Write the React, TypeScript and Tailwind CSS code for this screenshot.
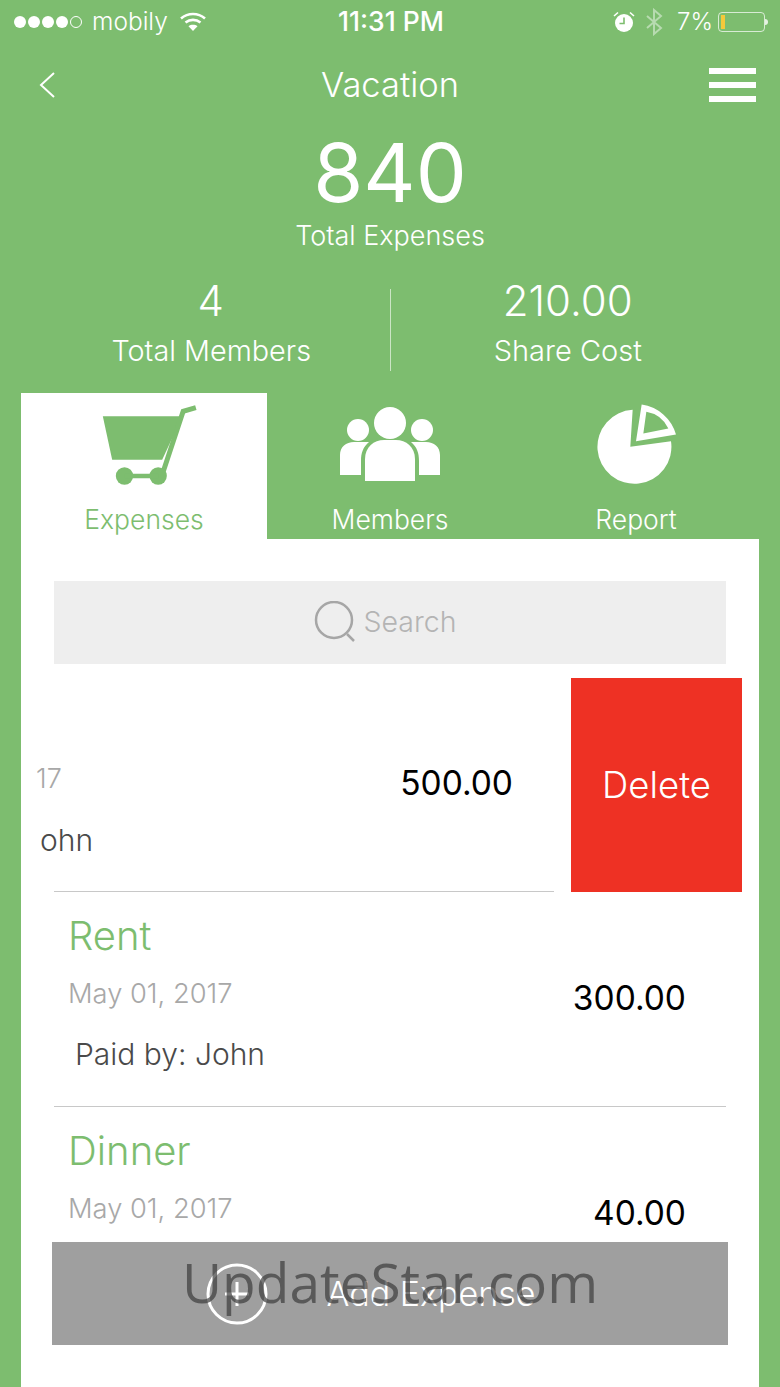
const font = { fontFamily: "Inter, 'Noto Sans', sans-serif" };

function Signal() {
  return (
    <div className="flex items-center gap-[2px]">
      {[0, 1, 2, 3].map((i) => (
        <span key={i} className="block h-[12px] w-[12px] rounded-full bg-white" />
      ))}
      <span className="block h-[12px] w-[12px] rounded-full border border-white" />
    </div>
  );
}

function Wifi() {
  return (
    <svg width="28" height="22" viewBox="0 0 28 22" fill="none" stroke="white" strokeWidth="2.6">
      <path d="M2 7.5 C9 1.5 19 1.5 26 7.5" />
      <path d="M6.5 11.5 C11 8 17 8 21.5 11.5" />
      <path d="M14 20 L9.5 15.2 C12 13.4 16 13.4 18.5 15.2 Z" fill="white" stroke="none" />
    </svg>
  );
}

function Alarm() {
  return (
    <svg width="22" height="22" viewBox="0 0 22 22">
      <circle cx="11" cy="12" r="9" fill="white" />
      <path d="M11 6.5 V12.5 H6.5" fill="none" stroke="#7dbd6f" strokeWidth="1.6" />
      <path d="M1 5 L5 1.5 M21 5 L17 1.5" stroke="white" strokeWidth="1.6" />
    </svg>
  );
}

function Bluetooth() {
  return (
    <svg width="18" height="28" viewBox="0 0 18 28" fill="none" stroke="white" strokeOpacity="0.45" strokeWidth="2">
      <path d="M2 8 L16 20 L9 26 V2 L16 8 L2 20" />
    </svg>
  );
}

function Battery() {
  return (
    <div className="flex items-center">
      <div className="flex h-[20px] w-[47px] items-stretch rounded-[4px] border border-white/70 p-[2px]">
        <div className="w-[4px] bg-[#f5c93a]" />
      </div>
      <div className="h-[6px] w-[3px] rounded-r-full bg-white/80" />
    </div>
  );
}

function CartIcon() {
  return (
    <svg width="107" height="85" viewBox="212 40 320 255">
      <path d="M247 83 H486 L425 213 H275 Z" fill="#7dbd6f" />
      <path d="M427 252 L488 68 L526 57" fill="none" stroke="#7dbd6f" strokeWidth="15" />
      <circle cx="312" cy="262" r="26" fill="#7dbd6f" />
      <circle cx="413" cy="262" r="26" fill="#7dbd6f" />
      <path d="M312 262 H413" stroke="#7dbd6f" strokeWidth="14" />
    </svg>
  );
}

function MembersIcon() {
  return (
    <svg width="104" height="80" viewBox="338 405 104 80" fill="white">
      <circle cx="358" cy="431" r="11" />
      <circle cx="422" cy="431" r="11" />
      <circle cx="390" cy="424" r="16" />
      <path d="M340 476 V456 C340 448 346 443 354 443 H369 C363 448 361 454 361 462 V476 Z" />
      <path d="M440 476 V456 C440 448 434 443 426 443 H411 C417 448 419 454 419 462 V476 Z" />
      <path d="M365 482 V460 C365 448 374 441 384 441 H396 C406 441 415 448 415 460 V482 Z" />
    </svg>
  );
}

function ReportIcon() {
  return (
    <svg width="90" height="87" viewBox="600 40 270 260" fill="white">
      <path d="M718 177 L725 66 A111 111 0 1 0 840 160 Z" />
      <path
        fillRule="evenodd"
        d="M735 160 L752 50 A125 125 0 0 1 855 140 Z M757 137 L766 72 A90 90 0 0 1 832 122 Z"
      />
    </svg>
  );
}

function Tab({ label, active, children }: { label: string; active?: boolean; children: React.ReactNode }) {
  return (
    <div className={`flex h-[146px] flex-col items-center pt-[5px] ${active ? "bg-white text-[#7dbd6f]" : "text-white"}`}>
      <div className="flex h-[92px] items-center">{children}</div>
      <div className="mt-[13px] text-[26.5px] font-light leading-[32px]">{label}</div>
    </div>
  );
}

function ExpenseRow({ title, amount, who }: { title: string; amount: string; who: string }) {
  return (
    <div className="mx-[33px] flex h-[215px] items-start justify-between border-b border-[#c8c8c8] pl-[14px] pr-[40px] pt-[22px]">
      <div className="flex flex-col">
        <div className="text-[40px] font-light leading-[44px] text-[#7dbd6f]">{title}</div>
        <div className="mt-[20px] text-[27.3px] font-light leading-[32px] text-[#a8a8a8]">May 01, 2017</div>
        <div className="ml-[7px] mt-[28px] text-[30px] font-light leading-[32px] text-[#4a4a4a]">{who}</div>
      </div>
      <div className="mt-[64px] text-[33.5px] leading-[40px] text-black">{amount}</div>
    </div>
  );
}

export default function App() {
  return (
    <div className="relative h-[1387px] w-[780px] overflow-hidden bg-[#7dbd6f] text-white" style={font}>
      {/* Status bar */}
      <div className="grid h-[43px] grid-cols-3 items-center pl-[14px] pr-[12px]">
        <div className="flex items-center gap-[10px]">
          <Signal />
          <span className="text-[24.5px] font-light leading-none">mobily</span>
          <span className="ml-[1px]"><Wifi /></span>
        </div>
        <div className="text-center text-[26.5px] font-medium leading-none">11:31 PM</div>
        <div className="flex items-center justify-end gap-[7px]">
          <Alarm />
          <span className="ml-[3px] mr-[7px]"><Bluetooth /></span>
          <span className="mr-[-2px] text-[24px] font-light leading-none">7%</span>
          <Battery />
        </div>
      </div>

      {/* Navigation */}
      <div className="mt-[12px] grid h-[60px] grid-cols-[1fr_auto_1fr] items-center px-[24px]">
        <svg className="ml-[14px]" width="18" height="28" viewBox="0 0 18 28" fill="none" stroke="white" strokeWidth="2">
          <path d="M16 2 L3 14 L16 26" />
        </svg>
        <div className="text-[34.5px] font-light leading-none">Vacation</div>
        <div className="flex flex-col items-end gap-[8px]">
          <span className="block h-[6px] w-[47px] bg-white" />
          <span className="block h-[6px] w-[47px] bg-white" />
          <span className="block h-[6px] w-[47px] bg-white" />
        </div>
      </div>

      {/* Totals */}
      <div className="flex flex-col items-center">
        <div className="mt-[13px] text-[81px] font-normal leading-[90px]">840</div>
        <div className="mt-[1px] text-[27px] font-light leading-[34px]">Total Expenses</div>
      </div>
      <div className="mt-[25px] flex px-[32px]">
        <div className="flex flex-1 flex-col items-center">
          <div className="text-[42px] font-light leading-[46px]">4</div>
          <div className="ml-[1px] mt-[9px] text-[28.8px] font-light leading-[36px]">Total Members</div>
        </div>
        <div className="mt-[11px] h-[82px] w-px bg-white/60" />
        <div className="flex flex-1 flex-col items-center">
          <div className="mr-[3px] text-[42px] font-light leading-[46px]">210.00</div>
          <div className="mr-[3px] mt-[9px] text-[29px] font-light leading-[36px]">Share Cost</div>
        </div>
      </div>

      {/* Tabs */}
      <div className="mx-[21px] mt-[22px] grid grid-cols-3">
        <Tab label="Expenses" active><CartIcon /></Tab>
        <Tab label="Members"><MembersIcon /></Tab>
        <Tab label="Report"><ReportIcon /></Tab>
      </div>

      {/* Expense list */}
      <div className="relative mx-[21px] h-[848px] overflow-hidden bg-white pt-[42px]">
        <div className="mx-[33px] flex h-[83px] items-center justify-center gap-[6px] bg-[#eeeeee] pr-[10px]">
          <svg width="44" height="44" viewBox="0 0 44 44" fill="none" stroke="#a6a6a6" strokeWidth="2.5">
            <circle cx="20" cy="19" r="18" />
            <path d="M33 33 L40 40" />
          </svg>
          <span className="text-[28.5px] font-light leading-none text-[#b4b4b4]">Search</span>
        </div>

        {/* Row swiped open to show its delete action */}
        <div className="mt-[14px] flex pl-[15px]">
          <div className="flex h-[214px] w-[518px] flex-col">
            <div className="flex flex-1 items-center justify-between pr-[41px]">
              <div className="mt-[50px] flex flex-col">
                <div className="text-[27px] font-light leading-[32px] text-[#a8a8a8]">17</div>
                <div className="ml-[4px] mt-[29px] text-[30px] font-light leading-[32px] text-[#4a4a4a]">ohn</div>
              </div>
              <div className="mb-[3px] text-[33.5px] leading-[40px] text-black">500.00</div>
            </div>
            <div className="ml-[18px] h-px bg-[#c8c8c8]" />
          </div>
          <div className="ml-[17px] flex h-[214px] w-[171px] items-center justify-center bg-[#ee3124] pt-[1px] text-[36.5px] font-light">
            Delete
          </div>
        </div>

        <ExpenseRow title="Rent" amount="300.00" who="Paid by: John" />
        <ExpenseRow title="Dinner" amount="40.00" who="Paid by: John" />

        <div className="absolute left-[31px] top-[703px] flex h-[103px] w-[676px] items-center justify-center gap-[59px] bg-[#9f9f9f] pr-[39px]">
          <svg width="62" height="62" viewBox="0 0 62 62" fill="none" stroke="white" strokeWidth="3">
            <circle cx="31" cy="31" r="29" />
            <path d="M31 19 V43 M19 31 H43" />
          </svg>
          <span className="text-[34px] font-light leading-none">Add Expense</span>
        </div>
      </div>

      <div
        className="absolute left-[182px] top-[1242px] text-[55px] leading-[80px] text-[#3c3c3c]/70"
        style={{ fontFamily: "'Open Sans', sans-serif" }}
      >
        UpdateStar.com
      </div>
    </div>
  );
}
